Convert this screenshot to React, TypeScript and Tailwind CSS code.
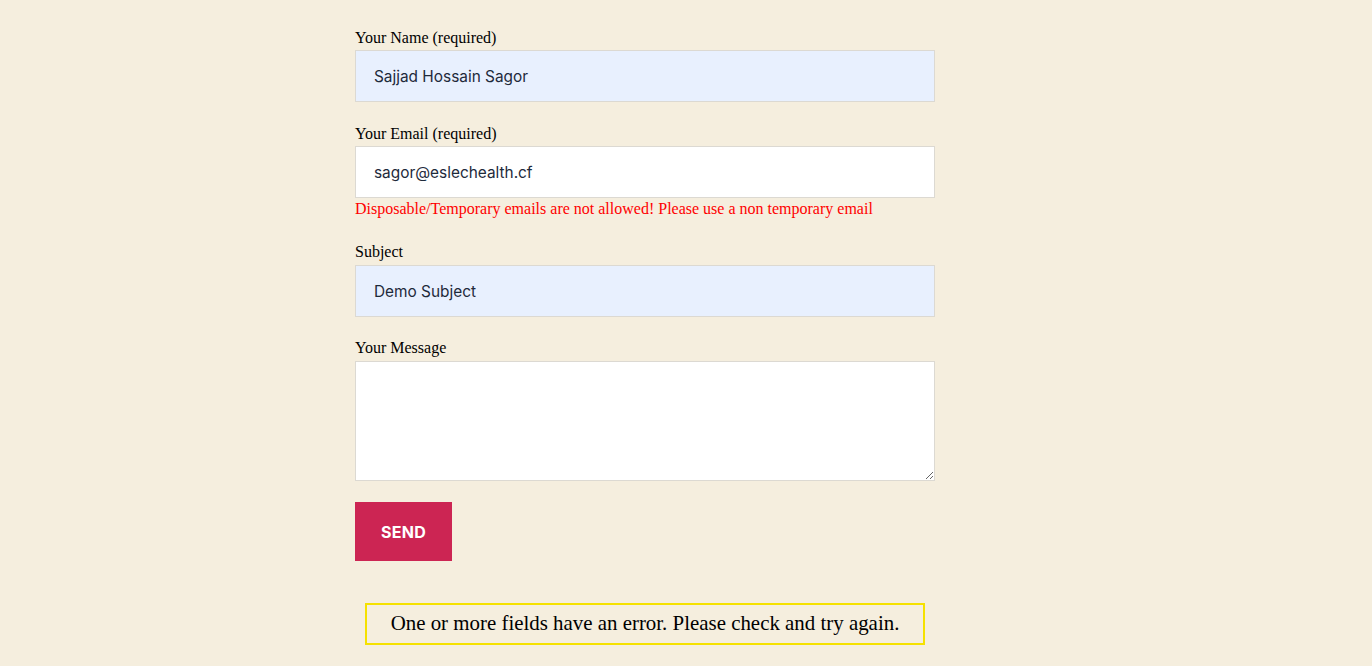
import React from 'react';

const serif = { fontFamily: '"Liberation Serif", "Times New Roman", serif' };
const sans = { fontFamily: 'Inter, "Noto Sans", sans-serif' };

function Field({ label, value, bg, gap }: { label: string; value: string; bg: string; gap: string }) {
  return (
    <div>
      <label className={`block text-[16px] leading-[18px] ${gap} text-black`} style={serif}>
        {label}
      </label>
      <input
        readOnly
        value={value}
        className={`block w-full h-[52px] px-[18px] border border-[#dcd9d2] ${bg} text-[15.4px] text-[#1e2a3b] outline-none`}
        style={sans}
      />
    </div>
  );
}

export default function App() {
  return (
    <div className="min-h-[666px] w-full bg-[#f5eede]">
      <form className="w-[580px] ml-[355px] pt-[29px]" onSubmit={(e) => e.preventDefault()}>
        <Field label="Your Name (required)" value="Sajjad Hossain Sagor" bg="bg-[#e8f0fe]" gap="mb-[3px]" />

        <div className="mt-[23px]">
          <Field label="Your Email (required)" value="sagor@eslechealth.cf" bg="bg-white" gap="mb-[3px]" />
          <p className="mt-[2px] text-[16px] leading-[18px] text-[#ff0000]" style={serif}>
            Disposable/Temporary emails are not allowed! Please use a non temporary email
          </p>
        </div>

        <div className="mt-[25px]">
          <Field label="Subject" value="Demo Subject" bg="bg-[#e8f0fe]" gap="mb-[4px]" />
        </div>

        <div className="mt-[22px]">
          <label className="block text-[16px] leading-[18px] mb-[4px] text-black" style={serif}>
            Your Message
          </label>
          <textarea className="block w-full h-[120px] border border-[#dcd9d2] bg-white outline-none" />
        </div>

        <button
          type="submit"
          className="mt-[21px] w-[97px] h-[59px] bg-[#cc2553] text-white text-[16px] font-bold tracking-[0.02em]"
          style={sans}
        >
          SEND
        </button>

        <div
          className="mt-[42px] mx-[10px] h-[42px] border-2 border-[#f5e100] flex items-center justify-center text-[20.9px] text-black"
          style={serif}
        >
          One or more fields have an error. Please check and try again.
        </div>
      </form>
    </div>
  );
}
